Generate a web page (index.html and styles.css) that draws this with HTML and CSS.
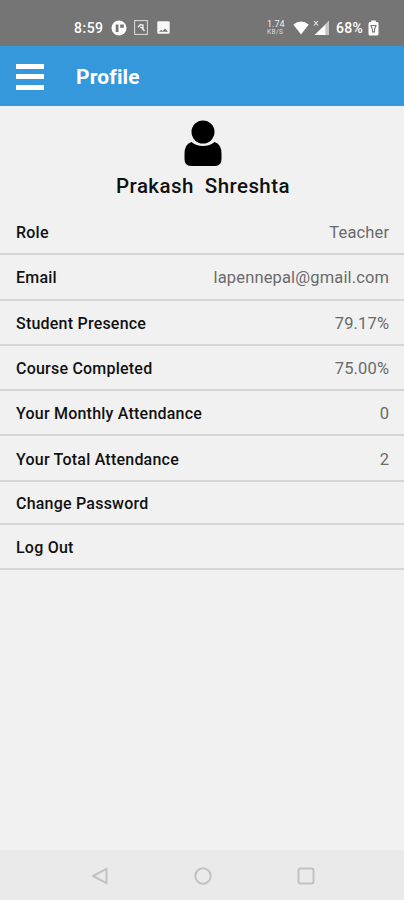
FILE: index.html
```html
<!DOCTYPE html>
<html lang="en">
<head>
<meta charset="utf-8">
<title>Profile</title>
<link rel="stylesheet" href="styles.css">
</head>
<body>
<div class="screen">
  <div class="status">
    <span class="time">8:59</span>
    <svg class="s-app" width="16" height="16" viewBox="0 0 16 16"><circle cx="8" cy="8" r="7.5" fill="#fff"/><path d="M4.700 12V4.500h2.800V12z" fill="#747474"/><path d="M9.200 4.500h3.600v3.300H9.200z" fill="#747474"/></svg>
    <svg class="s-box" width="14" height="15" viewBox="0 0 14 15"><rect x=".6" y=".6" width="12.8" height="13.8" fill="none" stroke="#ddd" stroke-width="1"/><path d="M4 7.300L6.500 4.500 9 5v3L6.300 7.300M7.500 7.500l3 3.500" fill="none" stroke="#eee" stroke-width="1.400"/></svg>
    <svg class="s-img" width="13" height="13" viewBox="0 0 13 13"><rect x=".3" y=".3" width="12.4" height="12.4" rx="1.2" fill="#f8f8f8"/><path d="M2 10.800l2-2 1.500 1.200 2.500-2.500 3 3.300z" fill="#777"/></svg>
    <span class="speed"><span>1.74</span><span class="unit">KB/S</span></span>
    <svg class="s-wifi" width="16" height="14" viewBox="0 0 16 14"><path d="M.3 3.500Q8-2.700 15.700 3.500L8 13.500z" fill="#fff"/></svg>
    <svg class="s-cell" width="17" height="16" viewBox="0 0 17 16"><path d="M1 1l4 4.500M5 1L1 5.500" stroke="#eee" stroke-width="1.1"/><path d="M1.500 15L16 1v14z" fill="#fff"/><path d="M12.300 4.600L16 1v14h-3.700z" fill="#c5c5c5"/></svg>
    <span class="battery">68%</span>
    <svg class="s-batt" width="11" height="16" viewBox="0 0 11 16"><path d="M3.200.5h4.600V2H9q1.500 0 1.500 1.500v10.300Q10.500 15.500 9 15.500H2Q.5 15.500.5 14V3.500Q.5 2 2 2h1.200z" fill="#fff"/><path d="M3 5.500h5L6.500 9.500v2.500h-2V9.500z" fill="none" stroke="#747474" stroke-width="1.100"/></svg>
  </div>
  <header class="bar">
    <div class="menu"><i></i><i></i><i></i></div>
    <h1>Profile</h1>
  </header>
  <section class="user">
    <svg width="38" height="47" viewBox="0 0 38 47"><path d="M7.500 22Q12 26 19 26T30.500 22Q37.500 24 37.500 34V39Q37.500 46 31 46H7Q.5 46 .5 39V34Q.5 24 7.500 22z"/><circle cx="19" cy="12" r="12.800" fill="#f1f1f1"/><circle cx="19" cy="12" r="11.500"/></svg>
    <h2>Prakash&nbsp; Shreshta</h2>
  </section>
  <main class="list">
    <div class="row"><b>Role</b><span>Teacher</span></div>
    <div class="row"><b>Email</b><span>lapennepal@gmail.com</span></div>
    <div class="row"><b>Student Presence</b><span>79.17%</span></div>
    <div class="row"><b>Course Completed</b><span>75.00%</span></div>
    <div class="row"><b>Your Monthly Attendance</b><span>0</span></div>
    <div class="row"><b>Your Total Attendance</b><span>2</span></div>
    <div class="row short"><b>Change Password</b></div>
    <div class="row last"><b>Log Out</b></div>
  </main>
  <nav class="nav">
    <svg width="18" height="18" viewBox="0 0 18 18"><path d="M2 9L15.500 1.800v14.400z"/></svg>
    <svg width="18" height="18" viewBox="0 0 18 18"><circle cx="9" cy="9" r="7.700"/></svg>
    <svg width="18" height="18" viewBox="0 0 18 18"><rect x="1.500" y="1.500" width="15" height="15" rx="2"/></svg>
  </nav>
</div>
</body>
</html>
```
FILE: styles.css
```css
* { box-sizing: border-box; }
body { margin: 0; font-family: Roboto, "Liberation Sans", sans-serif; background: #f1f1f1; }
.screen { width: 404px; height: 900px; display: flex; flex-direction: column; }
.status { height: 46px; background: #757575; display: flex; align-items: center; padding: 9px 0 0 74px; color: #fff; flex: none; }
.status svg { flex: none; }
.time, .battery { font-size: 14px; font-weight: 500; line-height: 16px; }
.time { width: 37px; letter-spacing: .5px; }
.s-box { margin-left: 7px; }
.s-img { margin-left: 9px; }
.speed { width: 18px; margin-left: 97px; display: flex; flex-direction: column; font-size: 9px; line-height: 9px; color: #eee; }
.unit { font-size: 6.5px; line-height: 7px; letter-spacing: .4px; color: #ddd; }
.s-wifi { margin-left: 8px; }
.s-cell { margin-left: 4px; }
.battery { margin-left: 6px; width: 32px; letter-spacing: .3px; }
.bar { height: 60px; background: #3498db; display: flex; align-items: center; padding: 1px 0 0 16px; flex: none; }
.menu { width: 28px; height: 26px; display: flex; flex-direction: column; justify-content: space-between; }
.menu i { height: 5px; background: #fff; }
.bar h1 { margin: 1px 0 0 32px; font-size: 21px; line-height: 24px; font-weight: 700; color: #fff; letter-spacing: .15px; }
.user { height: 104px; display: flex; flex-direction: column; align-items: center; padding: 14px 0 0 2px; flex: none; }
.user svg { display: block; }
.user h2 { margin: 7px 0 0; font-size: 20.5px; line-height: 24px; font-weight: 500; color: #111; letter-spacing: .43px; }
.list { flex: 1; }
.row { height: 45.3px; border-bottom: 2px solid #d6d6d6; display: flex; justify-content: space-between; align-items: center; padding: 2px 14.8px 0 16px; font-size: 16.5px; color: #6a6a6a; letter-spacing: .15px; }
.row b { font-size: 16px; font-weight: 500; color: #111; letter-spacing: .22px; }
.short { height: 43px; }
.last { height: 45px; }
.nav { height: 50px; background: #eaeaea; display: flex; gap: 85px; align-items: center; padding: 1px 0 0 91px; flex: none; }
.nav svg { fill: none; stroke: #c2c2c2; stroke-width: 2; stroke-linejoin: round; }
```
